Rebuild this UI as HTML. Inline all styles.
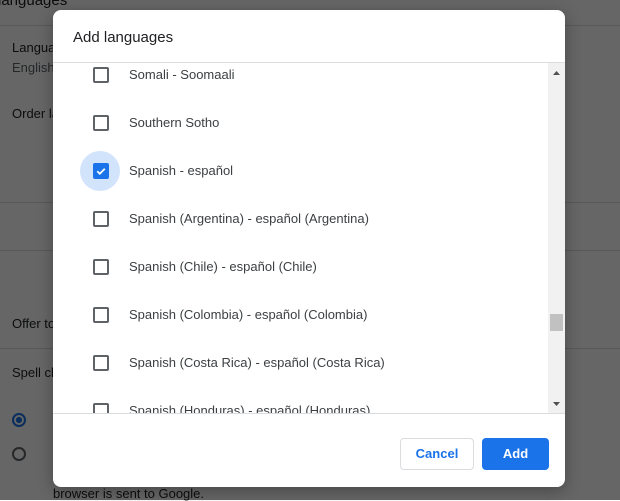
<!DOCTYPE html>
<html><head><style>
body{margin:0;width:620px;height:500px;overflow:hidden;background:#fff;font-family:"Liberation Sans",Arial,sans-serif;position:relative}
.bg{position:absolute;font-size:13px;color:#202124}
.ov{position:absolute;inset:0;background:rgba(0,0,0,0.6)}
.hl{position:absolute;left:0;width:620px;height:1px;background:#ddd}
.dlg{position:absolute;left:53px;top:10px;width:512px;height:477px;background:#fff;border-radius:8px;overflow:hidden;box-shadow:0 4px 16px rgba(0,0,0,.3)}
.title{position:absolute;left:20px;top:19px;font-size:15px;color:#202124}
.list{position:absolute;left:0;top:52px;width:512px;height:350px;border-top:1px solid #dadce0;border-bottom:1px solid #dadce0;overflow:hidden}
.row{position:absolute;left:0;height:48px;width:495px}
.cb{position:absolute;left:40px;top:16px;width:12px;height:12px;border:2px solid #5f6368;border-radius:2px}
.row span{position:absolute;left:76px;top:16px;font-size:13px;color:#3c4043}
.sb{position:absolute;right:0;top:0;width:17px;height:350px;background:#f1f1f1}
.btn{position:absolute;top:428px;height:32px;border-radius:4px;font-size:13px;font-weight:bold;text-align:center;line-height:32px}
</style></head><body>
<div class="bg" style="left:-2px;top:-8px;font-size:15px">languages</div>
<div class="hl" style="top:25px"></div>
<div class="bg" style="left:12px;top:40px">Language</div>
<div class="bg" style="left:12px;top:60px;color:#5f6368">English</div>
<div class="bg" style="left:12px;top:106px">Order la</div>
<div class="hl" style="top:202px"></div>
<div class="hl" style="top:250px"></div>
<div class="bg" style="left:12px;top:316px">Offer to</div>
<div class="hl" style="top:348px"></div>
<div class="bg" style="left:12px;top:365px">Spell ch</div>
<div style="position:absolute;left:12px;top:413px;width:10px;height:10px;border:2px solid #1a73e8;border-radius:50%;background:radial-gradient(#1a73e8 40%,transparent 45%)"></div>
<div style="position:absolute;left:12px;top:447px;width:10px;height:10px;border:2px solid #5f6368;border-radius:50%"></div>
<div class="bg" style="left:53px;top:486px">browser is sent to Google.</div>
<div class="ov"></div>
<div class="dlg">
<div class="title">Add languages</div>
<div class="list">
<div class="row" style="top:-12px"><div class="cb"></div><span>Somali - Soomaali</span></div>
<div class="row" style="top:36px"><div class="cb"></div><span>Southern Sotho</span></div>
<div class="row" style="top:84px"><div style="position:absolute;left:27px;top:4px;width:40px;height:40px;border-radius:50%;background:#d2e3fc"></div><div class="cb" style="background:#1a73e8;border-color:#1a73e8"><svg width="12" height="12" viewBox="0 0 12 12" style="position:absolute;left:0;top:0"><path d="M2.3 6.2l2.5 2.5 5-5" stroke="#fff" stroke-width="1.8" fill="none"/></svg></div><span>Spanish - español</span></div>
<div class="row" style="top:132px"><div class="cb"></div><span>Spanish (Argentina) - español (Argentina)</span></div>
<div class="row" style="top:180px"><div class="cb"></div><span>Spanish (Chile) - español (Chile)</span></div>
<div class="row" style="top:228px"><div class="cb"></div><span>Spanish (Colombia) - español (Colombia)</span></div>
<div class="row" style="top:276px"><div class="cb"></div><span>Spanish (Costa Rica) - español (Costa Rica)</span></div>
<div class="row" style="top:324px"><div class="cb"></div><span>Spanish (Honduras) - español (Honduras)</span></div>
<div class="sb">
<svg width="17" height="10" style="position:absolute;top:5px;left:0"><path d="M5 7h7l-3.5-4z" fill="#505050"/></svg>
<div style="position:absolute;left:2px;top:251px;width:13px;height:17px;background:#c1c1c1"></div>
<svg width="17" height="10" style="position:absolute;top:336px;left:0"><path d="M5 3h7l-3.5 4z" fill="#505050"/></svg>
</div>
</div>
<div class="btn" style="left:347px;width:72px;border:1px solid #dadce0;color:#1a73e8;height:30px;line-height:30px">Cancel</div>
<div class="btn" style="left:429px;width:67px;background:#1a73e8;color:#fff">Add</div>
</div>
</body></html>
